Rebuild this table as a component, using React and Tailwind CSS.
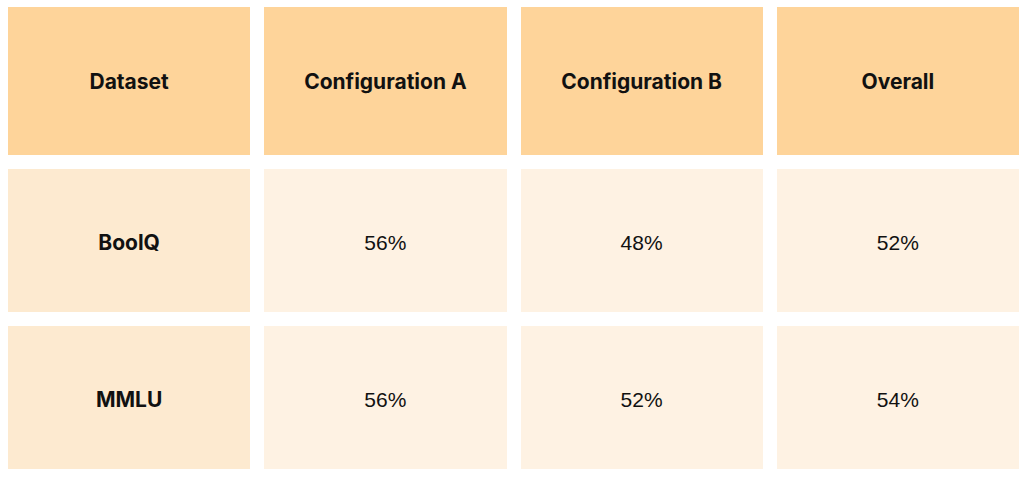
import React from 'react';

const headers = ['Dataset', 'Configuration A', 'Configuration B', 'Overall'];

const rows = [
  { name: 'BoolQ', values: ['56%', '48%', '52%'] },
  { name: 'MMLU', values: ['56%', '52%', '54%'] },
];

export default function App() {
  return (
    <div className="w-[1024px] h-[481px] bg-white pt-[7px] pl-[8px] pr-[5px] pb-[12px]">
      <div className="grid grid-cols-4 grid-rows-[148px_143px_143px] gap-[14px] text-[#111] font-['Inter','Liberation_Sans',sans-serif]">
        {headers.map((h) => (
          <div key={h} className="bg-[#fed49a] flex items-center justify-center pt-[2px] text-[21px] font-bold">
            {h}
          </div>
        ))}
        {rows.map((row) => (
          <React.Fragment key={row.name}>
            <div className="bg-[#fdead0] flex items-center justify-center pt-[5px] text-[21px] font-bold">
              {row.name}
            </div>
            {row.values.map((v, i) => (
              <div
                key={i}
                className="bg-[#fef2e3] flex items-center justify-center pt-[5px] text-[21px] font-['Liberation_Sans',Arial,sans-serif]"
              >
                {v}
              </div>
            ))}
          </React.Fragment>
        ))}
      </div>
    </div>
  );
}
